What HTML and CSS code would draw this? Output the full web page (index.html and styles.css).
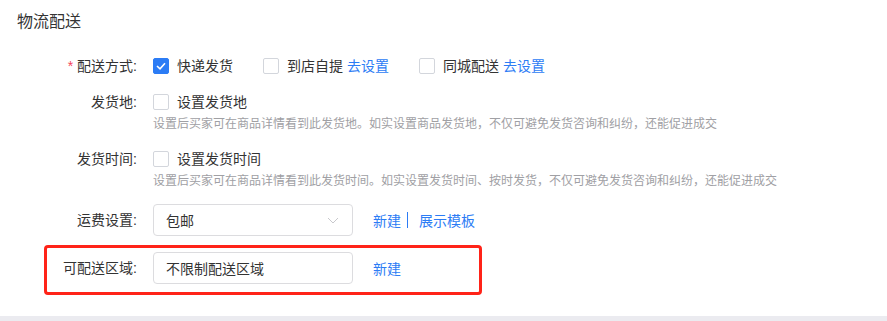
FILE: index.html
```html
<!DOCTYPE html>
<html lang="zh-CN">
  <head>
    <meta charset="UTF-8" />
    <meta name="viewport" content="width=device-width, initial-scale=1.0" />
    <title>物流配送</title>
    <link rel="stylesheet" href="styles.css">
  </head>
  <body>
    <div class="card">
      <h2 class="card-title">物流配送</h2>

      <div class="form">
        <div class="row row-center">
          <label class="row-label"><span class="required">*</span>配送方式:</label>
          <div class="options">
            <span class="option">
              <span class="check checked">
                <svg width="10" height="8" viewBox="0 0 10 8"><polyline points="1,4 4,6.8 9,1.2" fill="none" stroke="#fff" stroke-width="1.6"/></svg>
              </span>快递发货
            </span>
            <span class="option">
              <span class="check"></span>到店自提<a class="link link-gap">去设置</a>
            </span>
            <span class="option">
              <span class="check"></span>同城配送<a class="link link-gap">去设置</a>
            </span>
          </div>
        </div>

        <div class="row row-top row-place">
          <label class="row-label">发货地:</label>
          <div>
            <span class="option"><span class="check"></span>设置发货地</span>
            <p class="hint">设置后买家可在商品详情看到此发货地。如实设置商品发货地，不仅可避免发货咨询和纠纷，还能促进成交</p>
          </div>
        </div>

        <div class="row row-top row-time">
          <label class="row-label">发货时间:</label>
          <div>
            <span class="option"><span class="check"></span>设置发货时间</span>
            <p class="hint">设置后买家可在商品详情看到此发货时间。如实设置发货时间、按时发货，不仅可避免发货咨询和纠纷，还能促进成交</p>
          </div>
        </div>

        <div class="row row-center row-fee">
          <label class="row-label">运费设置:</label>
          <div class="controls">
            <div class="field select">
              <span>包邮</span>
              <svg width="12" height="12" viewBox="0 0 12 12"><polyline points="1,4 6,9 11,4" fill="none" stroke="#c8c8cc" stroke-width="1"/></svg>
            </div>
            <a class="link">新建</a>
            <span class="divider"></span>
            <a class="link">展示模板</a>
          </div>
        </div>

        <div class="row row-center row-area">
          <label class="row-label">可配送区域:</label>
          <div class="controls">
            <div class="field">不限制配送区域</div>
            <a class="link">新建</a>
          </div>
        </div>
      </div>
    </div>
  </body>
</html>
```

FILE: styles.css
```css
html,
body {
  margin: 0;
  background-color: #ebebf0;
  font-family: "Liberation Sans", "Noto Sans CJK SC", sans-serif;
  color: #333;
  font-size: 14px;
}

.card {
  background-color: #fff;
  height: 316px;
  box-sizing: border-box;
  padding-top: 10px;
}

.card-title {
  margin: 0;
  padding-left: 17px;
  font-size: 16px;
  font-weight: normal;
  line-height: 24px;
}

.form {
  margin-top: 16px;
}

.row {
  display: grid;
  grid-template-columns: 137px 1fr;
  column-gap: 16px;
}

.row-center {
  align-items: center;
  height: 32px;
}

.row-label {
  text-align: right;
  line-height: 24px;
  white-space: nowrap;
}

.required {
  color: #f5455b;
  margin-right: 4px;
}

.options {
  display: flex;
  align-items: center;
}

.option {
  display: inline-flex;
  align-items: center;
  line-height: 24px;
  margin-right: 30px;
}

.check {
  width: 16px;
  height: 16px;
  box-sizing: border-box;
  border: 1px solid #d3d6dc;
  border-radius: 2px;
  margin-right: 8px;
  display: inline-flex;
  align-items: center;
  justify-content: center;
}

.check.checked {
  background-color: #2c7cf5;
  border-color: #2c7cf5;
}

.link {
  color: #2c7cf5;
  cursor: pointer;
}

.link-gap {
  margin-left: 4px;
}

.row-place {
  margin-top: 8px;
}

.row-time {
  margin-top: 12px;
}

.hint {
  margin: 0;
  font-size: 12px;
  line-height: 21px;
  color: #a0a0a4;
  white-space: nowrap;
}

.row-fee {
  margin-top: 12px;
}

.controls {
  display: flex;
  align-items: center;
}

.field {
  width: 200px;
  height: 32px;
  box-sizing: border-box;
  border: 1px solid #dcdcdf;
  border-radius: 4px;
  padding: 0 13px 0 12px;
  display: flex;
  align-items: center;
  justify-content: space-between;
  margin-right: 20px;
}

.divider {
  width: 1px;
  height: 16px;
  background-color: #2c7cf5;
  margin: 0 11px 0 6px;
}

.row-area {
  margin-top: 9px;
  margin-left: 44px;
  width: 438px;
  height: auto;
  box-sizing: border-box;
  border: 3px solid #ff2318;
  border-radius: 4px;
  padding: 4px 0 8px;
  grid-template-columns: 90px 1fr;
}
```
